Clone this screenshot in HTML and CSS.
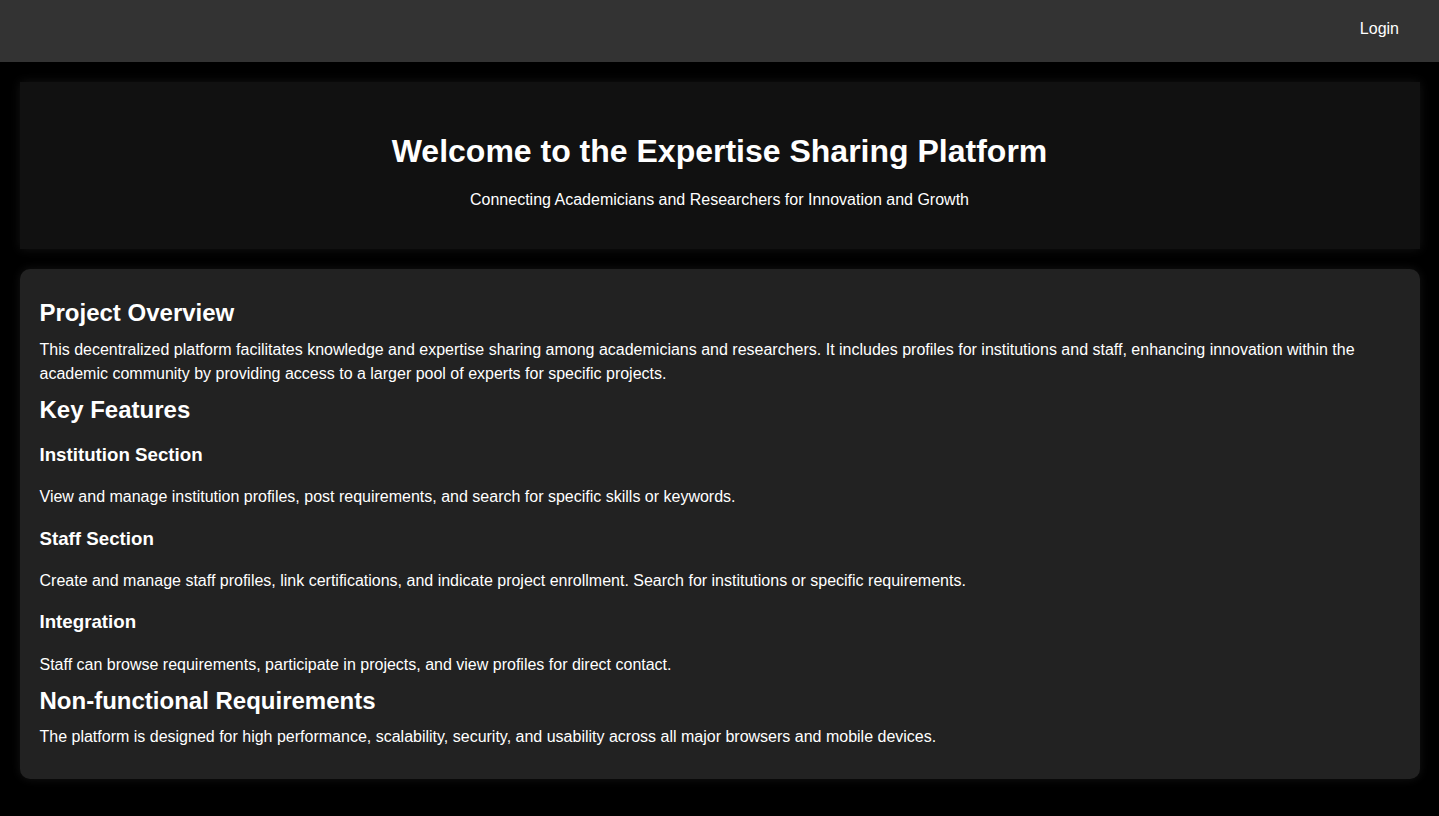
FILE: index.html
```html
<!DOCTYPE html>
<html lang="en">
<head>
<meta charset="utf-8">
<title>Expertise Sharing Platform</title>
<link rel="stylesheet" href="styles.css">
</head>
<body>
<header class="topbar">
  <a class="login" href="#">Login</a>
</header>
<main class="page">
  <section class="hero">
    <h1 class="hero-title">Welcome to the Expertise Sharing Platform</h1>
    <p class="hero-sub">Connecting Academicians and Researchers for Innovation and Growth</p>
  </section>
  <section class="card">
    <h2>Project Overview</h2>
    <p>This decentralized platform facilitates knowledge and expertise sharing among academicians and researchers. It includes profiles for institutions and staff, enhancing innovation within the academic community by providing access to a larger pool of experts for specific projects.</p>
    <h2>Key Features</h2>
    <h3>Institution Section</h3>
    <p>View and manage institution profiles, post requirements, and search for specific skills or keywords.</p>
    <h3>Staff Section</h3>
    <p>Create and manage staff profiles, link certifications, and indicate project enrollment. Search for institutions or specific requirements.</p>
    <h3>Integration</h3>
    <p>Staff can browse requirements, participate in projects, and view profiles for direct contact.</p>
    <h2>Non-functional Requirements</h2>
    <p class="last">The platform is designed for high performance, scalability, security, and usability across all major browsers and mobile devices.</p>
  </section>
</main>
</body>
</html>
```

FILE: styles.css
```css
html, body {
  margin: 0;
  padding: 0;
  background: #000;
}

body {
  font-family: "Liberation Sans", Arial, sans-serif;
  color: #fff;
  font-size: 16px;
}

.topbar {
  box-sizing: border-box;
  height: 62px;
  background: #333;
  display: flex;
  justify-content: flex-end;
  align-items: flex-start;
  padding: 20px 20px 0;
}

.login {
  color: #fff;
  text-decoration: none;
  padding: 0 20px;
  line-height: normal;
}

.page {
  max-width: 1400px;
  margin: 20px auto;
  display: flex;
  flex-direction: column;
  gap: 20px;
}

.hero {
  background: #111;
  padding: 40px 20px;
  text-align: center;
  box-shadow: 0 0 10px rgba(255, 255, 255, 0.08);
}

.hero-title {
  font-size: 32px;
  line-height: 1.2;
  margin: 10px 0 21px;
}

.hero-sub {
  margin: 0;
  line-height: normal;
}

.card {
  background: #222;
  padding: 20px 20px 20px;
  border-radius: 10px;
  box-shadow: 0 0 10px rgba(255, 255, 255, 0.08);
}

.card h2 {
  font-size: 24px;
  line-height: 1.2;
  margin: 10px 0;
}

.card h3 {
  font-size: 18.72px;
  line-height: 1.2;
  margin: 18.72px 0;
}

.card p {
  line-height: 1.5;
  margin: 0 0 10px;
}

.card p.last {
  margin-top: 1px;
}
```
